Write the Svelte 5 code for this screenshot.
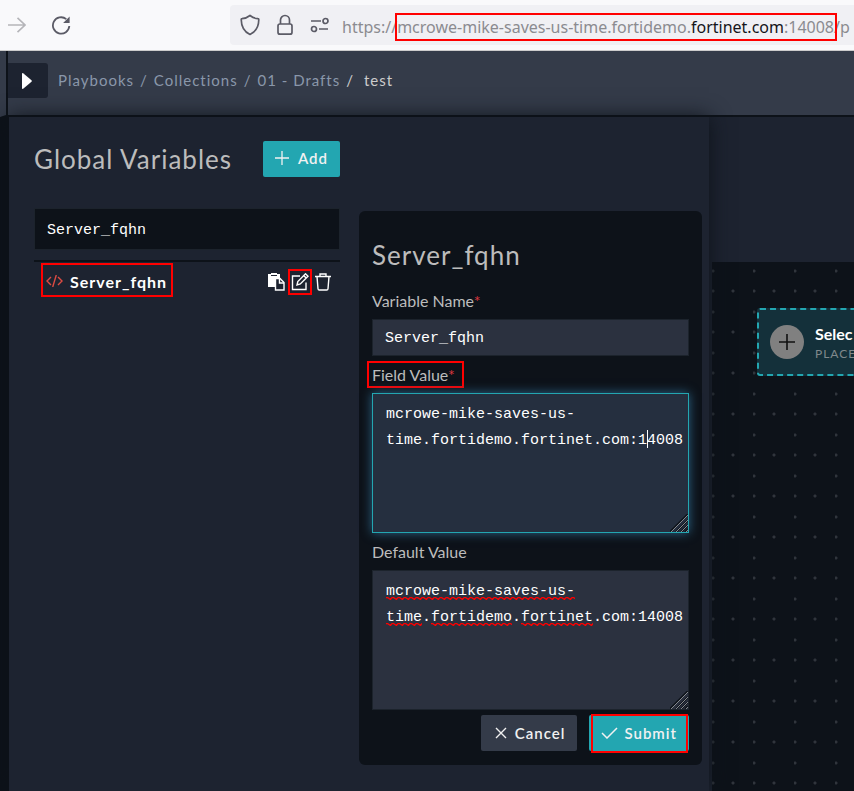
<script>
  let search = $state('Server_fqhn');
  let name = $state('Server_fqhn');
  let value = $state('mcrowe-mike-saves-us-time.fortidemo.fortinet.com:14008');
  let fallback = $state('mcrowe-mike-saves-us-time.fortidemo.fortinet.com:14008');

  const crumbs = ['Playbooks', 'Collections', '01 - Drafts'];

  // Misspelled runs in the default value: line, first column, length
  const misspelled = [
    { line: 0, from: 0, length: 21 },
    { line: 1, from: 0, length: 4 },
    { line: 1, from: 5, length: 9 },
    { line: 1, from: 15, length: 8 }
  ];
</script>

{#snippet grip()}
  <svg class="grip" width="18" height="18" viewBox="0 0 18 18" aria-hidden="true">
    <path d="M0 18 18 0M6 18 18 6M11 18l7-7M15 18l3-3" stroke="#10151c" stroke-width="2" />
    <path d="M1 18 18 1M6 18 18 6M11 18l7-7M16 18l2-2" stroke="#85898f" stroke-width="1" />
  </svg>
{/snippet}

<div class="app">
  <header class="browser">
    <nav class="controls" aria-label="Browser">
      <button class="plain" aria-label="Forward">
        <svg width="18" height="18" viewBox="0 0 18 18" fill="none" stroke="#b5b5b9" stroke-width="1.6"><path d="M0 9h17M9.500 1.800 17 9l-7.500 7.200" /></svg>
      </button>
      <button class="plain" aria-label="Reload">
        <svg width="20" height="20" viewBox="0 0 20 20" fill="none" stroke="#5b5b66" stroke-width="1.800"><path d="M18.300 11a8.200 8.200 0 1 1-3-6.900" /><path d="M18.600 1.500v6.500h-6.500z" fill="#5b5b66" stroke="none" /></svg>
      </button>
    </nav>
    <div class="address">
      <svg width="20" height="22" viewBox="0 0 20 22" fill="none" stroke="#5b5b66" stroke-width="1.700" stroke-linejoin="round"><path d="M10 1.500C7.500 3.500 5 4.500 2 4.700c-.6 0-.8.300-.8.800C1.300 12.500 3.500 17.500 10 20.500c6.500-3 8.700-8 8.800-15 0-.5-.2-.8-.8-.8-3-.2-5.500-1.200-8-3.200z" /></svg>
      <svg width="18" height="22" viewBox="0 0 18 22" fill="none" stroke="#5b5b66" stroke-width="1.700"><rect x="2" y="10" width="14" height="10.200" rx="2" /><path d="M4.500 10V6a4.500 4.500 0 0 1 9 0v4" /></svg>
      <svg width="20" height="16" viewBox="0 0 20 16" fill="none" stroke="#5b5b66" stroke-width="1.700"><path d="M1 4h10M9 12h9" /><circle cx="15.500" cy="4" r="2.500" /><circle cx="4" cy="12" r="2.500" /></svg>
      <span class="url">https://<span class="marked host">mcrowe-mike-saves-us-time.fortidemo.<b>fortinet.com</b>:14008</span>/p</span>
    </div>
  </header>

  <div class="topbar">
    <button class="expand" aria-label="Expand navigation">
      <svg width="10" height="16" viewBox="0 0 10 16"><path d="M0 1Q0-.5 1.500.5L9.500 7.300Q10 8 9.500 8.700L1.500 15.500Q0 16.500 0 15z" fill="#fff" /></svg>
    </button>
    <nav class="crumbs" aria-label="Breadcrumb">
      {#each crumbs as crumb}
        <a href="#{crumb}">{crumb}</a><span class="slash">/</span>
      {/each}
      <span class="current">test</span>
    </nav>
  </div>

  <div class="workspace">
    <aside class="panel">
      <div class="title">
        <h1>Global Variables</h1>
        <button class="btn teal add">
          <svg width="14" height="14" viewBox="0 0 14 14" stroke="currentColor" stroke-width="1.300"><path d="M7 0v14M0 7h14" /></svg>Add
        </button>
      </div>

      <div class="columns">
        <section class="list">
          <input class="field search" aria-label="Search variables" spellcheck="false" bind:value={search} />
          <div class="row">
            <span class="marked variable">
              <svg width="17" height="12" viewBox="0 0 17 12" fill="none" stroke="#dd4b43" stroke-width="1.400"><path d="M5 2 1 6l4 4M12 2l4 4-4 4M10.300 0 6.700 12" /></svg>
              Server_fqhn
            </span>
            <div class="actions">
              <button class="plain" aria-label="Copy">
                <svg width="17" height="18" viewBox="0 0 17 18"><path d="M0 1h3V0h6v1h3v4H8v9H0z" fill="#fff" /><path d="M3 2.500h6" stroke="#1d2330" /><path d="M7.500 5.500h4.500l4 4v7.500H7.500z" fill="#1d2330" stroke="#fff" stroke-width="1.400" /><path d="M11.500 5.500v4.500h4.500" fill="none" stroke="#fff" stroke-width="1.400" /></svg>
              </button>
              <button class="plain marked edit" aria-label="Edit">
                <svg width="18" height="18" viewBox="0 0 18 18" fill="none" stroke="#fff" stroke-width="1.400"><path d="M9 3H1.500v13.500H15V9.500" /><path d="M6 12l.8-3.500 7.700-7.700 2.500 2.500-7.700 7.700zM12.700 2.600l2.500 2.500" /></svg>
              </button>
              <button class="plain" aria-label="Delete">
                <svg width="16" height="18" viewBox="0 0 16 18" fill="none" stroke="#fff" stroke-width="1.400"><path d="M0 3.500h16M5 3.500V1h6v2.500M2 3.500l1 12.200q.1 1.300 1.300 1.300h7.400q1.200 0 1.300-1.300l1-12.200" /></svg>
              </button>
            </div>
          </div>
        </section>

        <form class="card" onsubmit={(event) => event.preventDefault()}>
          <h2>Server_fqhn</h2>
          <label for="name">Variable Name<i>*</i></label>
          <input id="name" class="field" spellcheck="false" bind:value={name} />
          <label for="value"><span class="marked required">Field Value<i>*</i></span></label>
          <div class="area">
            <textarea id="value" class="field active" spellcheck="false" bind:value></textarea>
            <div class="overlay" aria-hidden="true"><span class="caret"></span></div>
            {@render grip()}
          </div>
          <label for="fallback">Default Value</label>
          <div class="area">
            <textarea id="fallback" class="field" spellcheck="false" bind:value={fallback}></textarea>
            <div class="overlay" aria-hidden="true">
              {#each misspelled as run}
                <span class="squiggle" style="left: {run.from}ch; top: {run.line * 26 + 19}px; width: {run.length}ch"></span>
              {/each}
            </div>
            {@render grip()}
          </div>
          <div class="buttons">
            <button type="button" class="btn">
              <svg width="12" height="12" viewBox="0 0 12 12" stroke="currentColor" stroke-width="1.400"><path d="M1 1l10 10M11 1 1 11" /></svg>Cancel
            </button>
            <button type="submit" class="btn teal marked submit">
              <svg width="17" height="12" viewBox="0 0 17 12" fill="none" stroke="currentColor" stroke-width="1.500"><path d="M1 6l5 5L16 1" /></svg>Submit
            </button>
          </div>
        </form>
      </div>
    </aside>

    <main class="stage">
      <div class="details"></div>
      <div class="canvas">
        <button class="step">
          <span class="plus"><svg width="16" height="16" viewBox="0 0 16 16" stroke="#111" stroke-width="1.600"><path d="M8 0v16M0 8h16" /></svg></span>
          <span class="caption"><strong>Selec</strong><small>PLACE</small></span>
        </button>
      </div>
    </main>
  </div>
</div>

<style>
  :global(body) {
    background: #0d1219;
  }

  .app {
    display: flex;
    flex-direction: column;
    min-height: 100vh;
    overflow: hidden;
    font-family: Lato, sans-serif;
    font-size: 16px;
    color: #bcbcbc;
  }

  .app * {
    box-sizing: border-box;
  }

  svg {
    flex: none;
    display: block;
  }

  button,
  input,
  textarea {
    font: inherit;
    color: inherit;
    margin: 0;
  }

  .plain {
    padding: 0;
    border: 0;
    background: none;
  }

  .marked {
    position: relative;
  }

  .marked::after {
    content: '';
    position: absolute;
    inset: 0;
    border: 2px solid #f00;
    pointer-events: none;
  }

  .browser {
    display: flex;
    align-items: center;
    height: 51px;
    background: #f9f9fb;
    border-bottom: 1px solid #ccc;
  }

  .controls {
    display: flex;
    align-items: center;
    flex: none;
    gap: 25px;
    width: 230px;
    padding-left: 8px;
  }

  .address {
    display: flex;
    align-items: center;
    flex: 1;
    gap: 16px;
    min-width: 0;
    height: 40px;
    padding-left: 10px;
    overflow: hidden;
    background: #f0f0f4;
    border-radius: 4px 0 0 4px;
  }

  .url {
    margin-top: 3px;
    margin-left: -4px;
    font: 16px/24px 'Noto Sans', sans-serif;
    color: #8b8b90;
    white-space: nowrap;
  }

  .url b {
    font-weight: 400;
    color: #15141a;
  }

  .host::after {
    inset: -3px -3px -3px -2px;
  }

  .topbar {
    display: flex;
    align-items: center;
    height: 66px;
    padding-bottom: 5px;
    background: #343b49;
    border-left: 6px solid #343b49;
    border-bottom: 2px solid #0d1219;
    box-shadow: inset 2px 0 #0d1219;
  }

  .expand {
    width: 42px;
    height: 35px;
    padding: 0 0 0 14px;
    border: 0;
    border-left: 2px solid #0d1219;
    border-radius: 0 3px 3px 0;
    background: #1d2330;
  }

  .crumbs {
    display: flex;
    gap: 6px;
    padding: 0 0 2px 10px;
    font-size: 15px;
    letter-spacing: 1px;
  }

  .crumbs a {
    color: #8a97aa;
    text-decoration: none;
  }

  .slash {
    color: #8a97aa;
  }

  .current {
    padding-left: 4px;
    color: #ccc;
  }

  .slash:nth-last-child(2) {
    color: #ccc;
  }

  .workspace {
    display: flex;
    flex: 1;
    padding-left: 9px;
    background: #0d1219;
  }

  .panel {
    position: relative;
    flex: none;
    width: 700px;
    padding: 24px 7px 26px 25px;
    background: #1d2330;
    box-shadow: 0 0 20px #0d1219, 0 -2px #0d1219;
  }

  .title {
    display: flex;
    align-items: center;
    justify-content: space-between;
    width: 306px;
    height: 36px;
  }

  h1,
  h2 {
    margin: 0;
    font-size: 26px;
    font-weight: 400;
    line-height: 32px;
    letter-spacing: 1px;
    white-space: nowrap;
  }

  .btn {
    display: flex;
    align-items: center;
    gap: 8px;
    height: 36px;
    padding: 0 12px 2px;
    border: 0;
    border-radius: 2px;
    background: #343b49;
    color: #f1f1f1;
    font-size: 15px;
    font-weight: 600;
    letter-spacing: 1px;
  }

  .teal {
    background: #23a6b1;
  }

  .add {
    gap: 9px;
  }

  .columns {
    display: flex;
    align-items: flex-start;
    gap: 19px;
    padding-top: 31px;
  }

  .list {
    width: 306px;
  }

  .field {
    display: block;
    width: 100%;
    height: 37px;
    padding: 2px 12px 0;
    border: 1px solid #1c232c;
    border-radius: 0;
    outline: 0;
    background: #2b313f;
    color: #fff;
    font: 15px/26px 'Liberation Mono', monospace;
  }

  .search {
    height: 42px;
    background: #0d1219;
  }

  .row {
    display: flex;
    align-items: center;
    justify-content: space-between;
    margin-top: 10px;
    padding: 1px 9px 0 7px;
    border-top: 2px solid #0d1219;
  }

  .variable {
    display: flex;
    align-items: center;
    gap: 7px;
    height: 34px;
    padding: 2px 6px 0 5px;
    color: #fff;
    font-size: 16px;
    font-weight: 700;
    letter-spacing: 1px;
  }

  .actions {
    display: flex;
    align-items: center;
    gap: 6px;
    padding-top: 3px;
  }

  .edit::after {
    inset: -4px -3px;
  }

  .card {
    flex: 1;
    margin-top: 3px;
    padding: 28px 13px 14px;
    border-radius: 6px;
    background: #0d1219;
  }

  label {
    display: block;
    padding: 9px 0 8px;
    line-height: 20px;
  }

  h2 + label {
    padding-top: 20px;
  }

  label i {
    color: #d9363e;
    font-style: normal;
  }

  .required::after {
    inset: -4px -9px -4px -5px;
  }

  .area {
    position: relative;
    font: 15px/26px 'Liberation Mono', monospace;
  }

  textarea.field {
    height: 140px;
    padding: 8px 0 7px 13px;
    overflow: hidden;
    resize: none;
  }

  textarea.active {
    border-color: #23a6b1;
    background: #252f3f;
    box-shadow: 0 0 10px #2c6487;
  }

  .overlay {
    position: absolute;
    top: 8px;
    left: 14px;
    pointer-events: none;
  }

  .caret {
    position: absolute;
    top: 29px;
    left: 29ch;
    width: 1px;
    height: 18px;
    background: #fff;
  }

  .squiggle {
    position: absolute;
    height: 3px;
    background: url("data:image/svg+xml,%3Csvg xmlns='http://www.w3.org/2000/svg' width='6' height='3'%3E%3Cpath d='M0 .5 1.500 .5 4.500 2.500 6 .5' fill='none' stroke='red' stroke-width='1.300'/%3E%3C/svg%3E") repeat-x;
  }

  .grip {
    position: absolute;
    right: 1px;
    bottom: 1px;
    pointer-events: none;
  }

  .buttons {
    display: flex;
    justify-content: flex-end;
    gap: 12px;
    padding-top: 5px;
  }

  .buttons .btn {
    padding: 0 12px 1px 14px;
  }

  .buttons .submit {
    gap: 6px;
    padding-left: 12px;
  }

  .submit::after {
    inset: -1px 1px -2px 2px;
  }

  .stage {
    display: flex;
    flex: 1;
    flex-direction: column;
    min-width: 0;
    background: #1d2330;
  }

  .details {
    height: 145px;
  }

  .canvas {
    flex: 1;
    margin-left: 3px;
    padding: 46px 0 0 45px;
    overflow: hidden;
    background:
      radial-gradient(circle at 1px 9px, #30353c 1px, transparent 2px) 0 0 / 41px 41px,
      radial-gradient(circle at 1px 29px, #30353c 1px, transparent 2px) 0 0 / 41px 41px,
      radial-gradient(circle at 21px 29px, #30353c 1px, transparent 2px) 0 0 / 41px 41px,
      #0d1219;
  }

  .step {
    display: flex;
    align-items: center;
    gap: 11px;
    width: 240px;
    height: 68px;
    padding: 0 11px;
    border: 2px dashed #23a6b1;
    border-radius: 3px;
    background: #14303a;
    text-align: left;
  }

  .plus {
    display: grid;
    place-items: center;
    flex: none;
    width: 34px;
    height: 34px;
    border-radius: 50%;
    background: #808080;
  }

  .caption {
    display: flex;
    flex-direction: column;
    gap: 2px;
    padding-top: 4px;
  }

  .caption strong {
    color: #fff;
    font-size: 16px;
    line-height: 18px;
  }

  .caption small {
    color: #80898c;
    font-size: 12px;
    line-height: 18px;
    letter-spacing: 1px;
  }
</style>
